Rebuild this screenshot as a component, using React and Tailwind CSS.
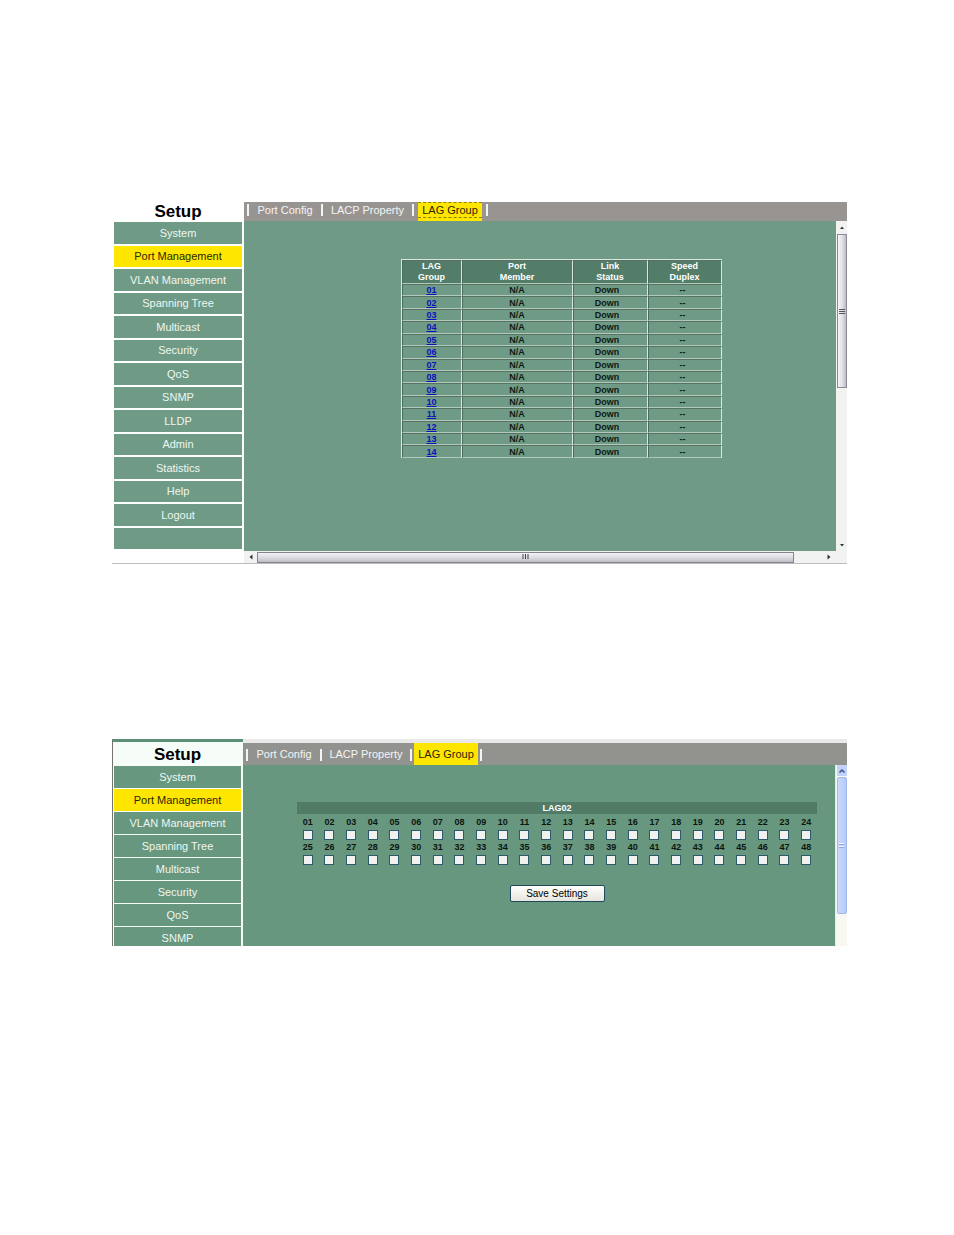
import React, { useState } from 'react'
import clsx from 'clsx'

const MENU = [
  'System', 'Port Management', 'VLAN Management', 'Spanning Tree', 'Multicast', 'Security', 'QoS',
  'SNMP', 'LLDP', 'Admin', 'Statistics', 'Help', 'Logout',
]

const GROUPS = Array.from({ length: 14 }, (_, i) => String(i + 1).padStart(2, '0'))
const PORTS = Array.from({ length: 48 }, (_, i) => String(i + 1).padStart(2, '0'))

function MenuLink({ label, className }) {
  const active = label === 'Port Management'
  return (
    <a
      href="#"
      className={clsx(
        'flex items-center justify-center text-[11px] leading-3',
        active ? 'bg-[#fee600] text-[#2a2600]' : 'text-[#eef6f1]',
        className,
      )}
    >
      {label}
    </a>
  )
}

function Separator() {
  return <span className="w-0.5 h-3 mt-0.5 bg-[#f4f4f4] shrink-0" />
}

function Tab({ label, className }) {
  return (
    <button type="button" className={clsx('text-[11px] leading-4 text-center text-[#f4f4f4] whitespace-nowrap', className)}>
      {label}
    </button>
  )
}

function Arrow({ points, color }) {
  return (
    <svg viewBox="0 0 8 8" className="w-2 h-2">
      <polygon points={points} fill={color} />
    </svg>
  )
}

function LagTable() {
  const cell = 'border-t border-t-[#55735f] border-b border-b-[#b3c8bc] border-l border-l-[#4c6b5d] border-r border-r-[#dbe6e0] p-0 text-center'
  const head = clsx(cell, 'bg-[#537c69] text-white font-bold leading-[11px]')
  return (
    <table className="w-80 h-[199px] mx-auto table-fixed border-separate border-spacing-0 border-t border-l border-[#dbe6e0] text-[9px] leading-[10px] font-bold text-[#101914]">
      <colgroup>
        <col className="w-[60px]" />
        <col className="w-[111px]" />
        <col className="w-[75px]" />
        <col className="w-[74px]" />
      </colgroup>
      <thead>
        <tr>
          <th className={head}>LAG<br />Group</th>
          <th className={head}>Port<br />Member</th>
          <th className={head}>Link<br />Status</th>
          <th className={head}>Speed<br />Duplex</th>
        </tr>
      </thead>
      <tbody>
        {GROUPS.map(id => (
          <tr key={id}>
            <td className={cell}><a href="#" className="text-[#0a12b8] underline">{id}</a></td>
            <td className={cell}>N/A</td>
            <td className={clsx(cell, 'pr-1.5')}>Down</td>
            <td className={clsx(cell, 'pr-1')}>--</td>
          </tr>
        ))}
      </tbody>
    </table>
  )
}

function GroupListPanel() {
  return (
    <section className="flex border-b border-[#bdbdbd]">
      <aside className="w-[132px] shrink-0 flex flex-col pl-0.5 pr-0.5">
        <h2 className="h-5 text-[17px] leading-5 font-bold text-center">Setup</h2>
        <nav className="h-[327px] grid auto-rows-fr gap-0.5">
          {MENU.map(label => <MenuLink key={label} label={label} className={label !== 'Port Management' && 'bg-[#6f9b86]'} />)}
          <span className="bg-[#6f9b86]" />
        </nav>
      </aside>

      <div className="flex-1 min-w-0 flex flex-col">
        <div className="h-[19px] flex items-start pl-[3px] bg-[#989491]">
          <Separator />
          <Tab label="Port Config" className="w-[72px]" />
          <Separator />
          <Tab label="LACP Property" className="w-[89px]" />
          <Separator />
          <button type="button" className="w-16 h-[19px] mx-1 flex flex-col bg-[#fee600] text-[11px] text-[#2a2600]">
            <span className="w-full border-y border-dashed border-[#8f8300] leading-[14px]">LAG Group</span>
          </button>
          <Separator />
        </div>

        <div className="flex">
          <div className="flex-1 min-w-0 h-[330px] pt-[38px] pl-[42px] bg-[#6f9b86]">
            <LagTable />
          </div>
          <div className="w-[11px] shrink-0 flex flex-col items-center bg-[#f3f2f2]">
            <span className="h-[13px] flex items-center"><Arrow points="2,5 4,2.5 6,5" color="#333" /></span>
            <span className="w-2.5 h-[154px] flex items-center justify-center border border-[#8c8b93] bg-linear-to-r from-[#f5f4f7] via-[#e4e2e9] to-[#bdbbc6]">
              <svg viewBox="0 0 6 7" className="w-1.5 h-[7px]">
                <path d="M0 1.5h6M0 3.5h6M0 5.5h6" stroke="#555" strokeWidth="1" />
              </svg>
            </span>
            <span className="mt-auto h-3 flex items-center"><Arrow points="2,3 6,3 4,5.5" color="#333" /></span>
          </div>
        </div>

        <div className="h-3 flex items-center bg-[#f3f2f2]">
          <span className="w-[13px] flex justify-center"><Arrow points="5.5,1.5 5.5,6.5 2.5,4" color="#333" /></span>
          <span className="flex-1 h-[11px] flex items-center justify-center border border-[#85848c] bg-linear-to-b from-[#f3f2f5] via-[#dddce2] to-[#bfbec7]">
            <svg viewBox="0 0 7 6" className="w-[7px] h-1.5">
              <path d="M1 0v5M3.5 0v5M6 0v5" stroke="#444" strokeWidth="1" />
            </svg>
          </span>
          <span className="w-[53px] pr-3.5 flex justify-end"><Arrow points="2.5,1.5 2.5,6.5 5.5,4" color="#333" /></span>
        </div>
      </div>
    </section>
  )
}

function PortSelectPanel() {
  const [picked, setPicked] = useState({})

  return (
    <section className="h-[207px] flex overflow-hidden">
      <aside className="w-[131px] shrink-0 flex flex-col border-t-3 border-t-[#5b8f76] border-l border-l-[#77736f] pl-px pr-0.5 bg-[#f6fdf8]">
        <h2 className="h-6 shrink-0 text-[17px] leading-[26px] font-bold text-center">Setup</h2>
        <nav className="flex flex-col gap-px">
          {MENU.slice(0, 8).map(label => (
            <MenuLink key={label} label={label} className={clsx('h-[22px] shrink-0', label !== 'Port Management' && 'bg-[#67987f]')} />
          ))}
        </nav>
      </aside>

      <div className="flex-1 min-w-0 flex flex-col border-t-4 border-[#e8e9e8]">
        <div className="h-[22px] shrink-0 flex items-center pl-[3px] bg-[#92938f]">
          <Separator />
          <Tab label="Port Config" className="w-[72px]" />
          <Separator />
          <Tab label="LACP Property" className="w-[88px]" />
          <Separator />
          <button type="button" className="w-16 h-[22px] mx-0.5 bg-[#fee600] text-[11px] text-[#2a2600]">LAG Group</button>
          <Separator />
        </div>

        <div className="flex-1 flex">
          <form className="flex-1 min-w-0 pt-[37px] pl-[54px] pr-[18px] bg-[#67987f]" onSubmit={e => e.preventDefault()}>
            <h3 className="h-3 bg-[#517b67] text-white text-[9px] leading-3 font-bold text-center">LAG02</h3>
            <div className="pt-px grid grid-cols-24 text-[9px] leading-[15px] font-bold text-[#0d1510]">
              {PORTS.map(port => (
                <label key={port} className="flex flex-col items-center">
                  {port}
                  <input
                    type="checkbox"
                    checked={!!picked[port]}
                    onChange={() => setPicked(prev => ({ ...prev, [port]: !prev[port] }))}
                    className="appearance-none w-2.5 h-2.5 border border-[#2d5a6b] bg-[#f1f2f0] checked:bg-[#3a7a3a]"
                  />
                </label>
              ))}
            </div>
            <button
              type="submit"
              className="block w-[95px] h-[17px] mt-5 mx-auto rounded-xs border border-[#1f4a5c] bg-linear-to-b from-white to-[#e6e5dd] text-[10px] leading-[14px] text-black"
            >
              Save Settings
            </button>
          </form>

          {/* scrollbar */}
          <div className="w-3 shrink-0 flex flex-col items-center border-l border-[#e6ebe6] bg-[#f7f8f2]">
            <span className="w-2.5 h-[11px] flex items-center justify-center bg-[#c2d3fb]">
              <svg viewBox="0 0 8 8" className="w-2 h-2">
                <path d="M1.5 5.5L4 3l2.5 2.5" stroke="#3c517d" strokeWidth="1.5" fill="none" />
              </svg>
            </span>
            <span className="w-2.5 h-[137px] mt-px flex items-center justify-center rounded-xs border border-[#a3b8ea] bg-linear-to-r from-[#cbdafd] to-[#b5c8f7]">
              <svg viewBox="0 0 5 5" className="w-[5px] h-[5px]">
                <path d="M0 .5h5M0 3.5h5" stroke="#f2f6ff" />
                <path d="M0 1.5h5M0 4.5h5" stroke="#8da5de" />
              </svg>
            </span>
          </div>
        </div>
      </div>
    </section>
  )
}

export default function App() {
  return (
    <main className="min-h-screen flex flex-col gap-[175px] pt-[202px] pb-28 pl-28 pr-[107px] bg-white text-black font-['Liberation_Sans',Arial,sans-serif]">
      <GroupListPanel />
      <PortSelectPanel />
    </main>
  )
}
